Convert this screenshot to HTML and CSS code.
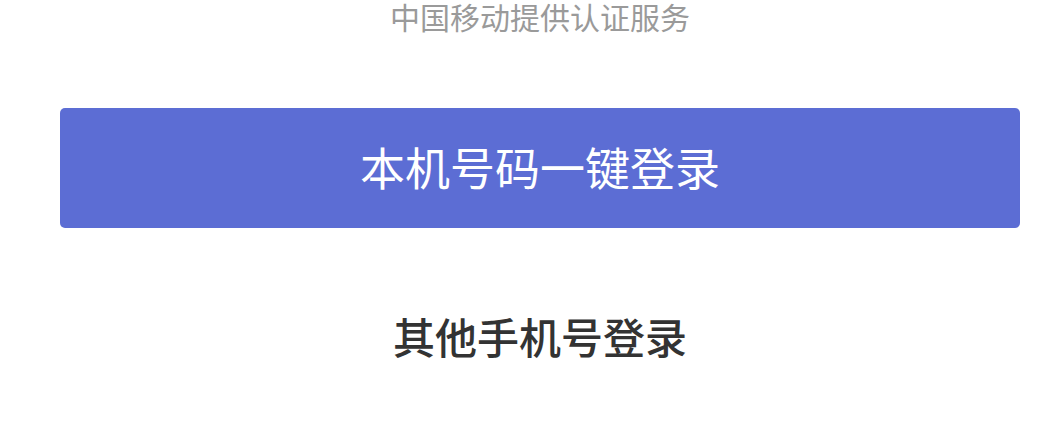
FILE: index.html
```html
<!DOCTYPE html>
<html lang="zh-CN">
<head>
    <meta charset="UTF-8">
    <meta name="viewport" content="width=device-width, initial-scale=1.0">
    <title>一键登录</title>
    <link rel="stylesheet" href="styles.css">
</head>
<body>
    <div class="login">
        <div class="provider">中国移动提供认证服务</div>

        <button class="quick-login">本机号码一键登录</button>

        <div class="other-login">其他手机号登录</div>
    </div>
</body>
</html>
```

FILE: styles.css
```css
* {
    box-sizing: border-box;
    font-family: "Noto Sans CJK SC", "Noto Sans", sans-serif;
}

html, body {
    overflow: hidden;
}

body {
    margin: 0;
    background-color: #fff;
}

.login {
    width: 960px;
    margin-left: 60px;
    display: flex;
    flex-direction: column;
    align-items: stretch;
}

.provider {
    color: #9a9a9a;
    font-size: 30px;
    line-height: 32px;
    text-align: center;
}

.quick-login {
    margin-top: 76px;
    height: 120px;
    padding: 0 0 4px;
    border: none;
    border-radius: 5px;
    background-color: #5c6dd4;
    color: #fff;
    font-size: 45px;
    cursor: pointer;
}

.other-login {
    margin-top: 86px;
    color: #333;
    font-size: 42px;
    font-weight: 500;
    line-height: 44px;
    text-align: center;
}
```
